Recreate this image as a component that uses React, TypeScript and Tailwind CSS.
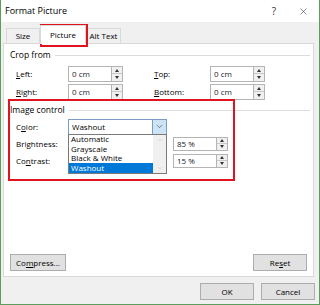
import { ChevronDown, ChevronUp, X } from 'lucide-react';

const font = { fontFamily: '"Open Sans", "Liberation Sans", Arial, sans-serif' };

function U({ text, at }: { text: string; at: number }) {
  return (
    <span>
      {text.slice(0, at)}
      <span className="underline underline-offset-[1px]">{text[at]}</span>
      {text.slice(at + 1)}
    </span>
  );
}

function Spinner({ h = 16 }: { h?: number }) {
  return (
    <div className={`flex w-[11px] flex-col border border-l-0 border-[#b4b4b4] bg-[#f0f0f0] ${h === 16 ? 'h-[16px]' : 'h-[14px]'}`}>
      <div className="flex flex-1 items-center justify-center border-b border-[#c8c8c8]">
        <div className="h-0 w-0 border-x-[2.5px] border-b-[3px] border-x-transparent border-b-[#333]" />
      </div>
      <div className="flex flex-1 items-center justify-center">
        <div className="h-0 w-0 border-x-[2.5px] border-t-[3px] border-x-transparent border-t-[#333]" />
      </div>
    </div>
  );
}

function NumField({ value, small }: { value: string; small?: boolean }) {
  return (
    <div className="flex">
      <div className={`flex w-[44px] items-center border border-[#b4b4b4] bg-white pl-[3px] text-[8px] text-[#1a1a2a] ${small ? 'h-[14px]' : 'h-[16px]'}`}>
        {value}
      </div>
      <Spinner h={small ? 14 : 16} />
    </div>
  );
}

function GroupTitle({ title }: { title: string }) {
  return (
    <div className="flex items-center gap-[4px] pl-[6px] pr-[3px]">
      <span className="text-[8.5px]">{title}</span>
      <div className="h-px flex-1 bg-[#dcdcdc]" />
    </div>
  );
}

function Btn({ label, cls = '' }: { label: React.ReactNode; cls?: string }) {
  return (
    <div className={`flex h-[17px] items-center justify-center border border-[#adadad] bg-[#e1e1e1] text-[8px] ${cls}`}>
      {label}
    </div>
  );
}

export default function App() {
  return (
    <div style={font} className="relative flex h-[305px] w-[320px] flex-col border-x border-b border-[#5c9c5c] bg-[#f0f0f0] text-black">
      {/* Title bar */}
      <div className="flex h-[22px] items-center bg-white pl-[4px] pr-[10px]">
        <span className="text-[9px]">Format Picture</span>
        <span className="ml-auto mr-[22px] text-[10px] text-[#333]">?</span>
        <X size={11} strokeWidth={1.2} className="text-[#333]" />
      </div>

      {/* Tabs */}
      <div className="flex h-[21px] items-end pl-[5px] text-[8px]">
        <div className="flex h-[15px] w-[34px] items-center justify-center border border-b-0 border-[#d9d9d9] bg-[#f0f0f0]">Size</div>
        <div className="z-10 -mb-px flex h-[19px] w-[46px] items-center justify-center border border-b-0 border-[#d9d9d9] bg-white">Picture</div>
        <div className="flex h-[15px] w-[35px] items-center justify-center border border-b-0 border-[#d9d9d9] bg-[#f0f0f0]">Alt Text</div>
      </div>

      {/* Panel */}
      <div className="ml-[2px] flex h-[234px] w-[311px] flex-col border border-[#d9d9d9] bg-white">
        <div className="pt-[5px]">
          <GroupTitle title="Crop from" />
        </div>
        <div className="mt-[4px] grid grid-cols-[52px_86px_56px_auto] gap-y-[2px] pl-[12px] text-[8px]">
          <div className="flex items-center"><U text="Left:" at={0} /></div>
          <NumField value="0 cm" />
          <div className="flex items-center"><U text="Top:" at={0} /></div>
          <NumField value="0 cm" />
          <div className="flex items-center"><U text="Right:" at={0} /></div>
          <NumField value="0 cm" />
          <div className="flex items-center"><U text="Bottom:" at={0} /></div>
          <NumField value="0 cm" />
        </div>

        <div className="mt-[4px]">
          <GroupTitle title="Image control" />
        </div>
        <div className="relative mt-[2px] flex flex-col pl-[12px] text-[8px]">
          <div className="flex h-[16px] items-center">
            <div className="w-[52px]"><U text="Color:" at={1} /></div>
            <div className="flex h-[16px] w-[99px] items-center border border-[#7a9cc6] bg-white">
              <span className="flex-1 pl-[3px]">Washout</span>
              <div className="flex h-full w-[14px] items-center justify-center border-l border-[#7a9cc6] bg-[#cde4f7]">
                <ChevronDown size={9} strokeWidth={1.5} className="text-[#333]" />
              </div>
            </div>
          </div>
          <div className="mt-[2px] flex h-[14px] items-center">
            <div className="w-[157px]"><U text="Brightness:" at={3} /></div>
            <NumField value="85 %" small />
          </div>
          <div className="mt-[3px] flex h-[14px] items-center">
            <div className="w-[157px]"><U text="Contrast:" at={2} /></div>
            <NumField value="15 %" small />
          </div>

          {/* Open dropdown list */}
          <div className="absolute left-[64px] top-[15px] flex h-[40px] w-[99px] border border-[#7a7a7a] bg-white">
            <div className="flex flex-1 flex-col justify-end">
              <div className="flex h-[9.5px] items-center pl-[2px]">Automatic</div>
              <div className="flex h-[9.5px] items-center pl-[2px]">Grayscale</div>
              <div className="flex h-[9.5px] items-center pl-[2px]">Black &amp; White</div>
              <div className="flex h-[9.5px] items-center bg-[#0078d7] pl-[2px] text-white">Washout</div>
            </div>
            <div className="flex w-[13px] flex-col items-center justify-between bg-[#f0f0f0] py-[1px]">
              <ChevronUp size={8} strokeWidth={1.5} className="text-[#c2c2c2]" />
              <ChevronDown size={8} strokeWidth={1.5} className="text-[#c2c2c2]" />
            </div>
          </div>
        </div>

        <div className="mt-auto flex px-[6px] pb-[5px]">
          <Btn label={<U text="Compress..." at={2} />} cls="w-[56px]" />
          <Btn label={<U text="Reset" at={2} />} cls="ml-auto w-[54px]" />
        </div>
      </div>

      {/* Footer buttons */}
      <div className="mt-[6px] flex justify-end gap-[7px] pr-[4px]">
        <Btn label="OK" cls="w-[54px] border-[#0078d7]" />
        <Btn label="Cancel" cls="w-[54px]" />
      </div>

      {/* Annotations */}
      <div className="pointer-events-none absolute left-[39px] top-[24px] h-[23px] w-[48px] border-2 border-[#e0141e]" />
      <div className="pointer-events-none absolute left-[7px] top-[99px] h-[82px] w-[227px] border-2 border-[#e0141e]" />
    </div>
  );
}
